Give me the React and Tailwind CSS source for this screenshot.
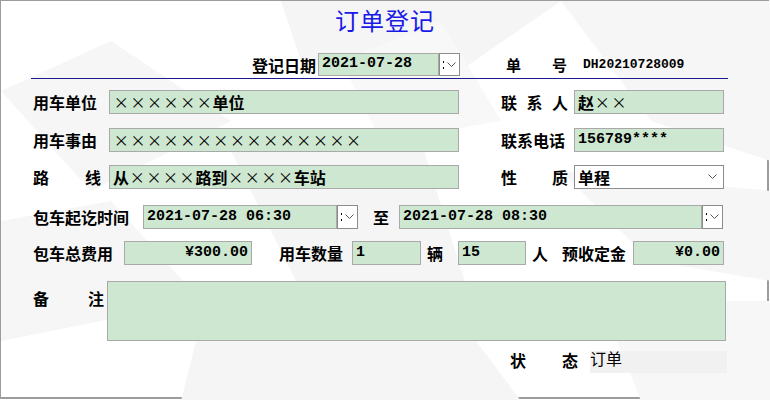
import React from 'react'

const CJK = { fontFamily: '"Noto Sans CJK SC", "Liberation Sans", sans-serif' }

// wrap each × so it takes a full-width cell like in the original form
function Xs({ text }) {
  return text.split('').map((c, i) =>
    c === '×' ? (
      <span key={i} className="inline-block w-[16.6px] text-center font-normal text-[15px]">×</span>
    ) : (
      <span key={i}>{c}</span>
    )
  )
}

function Label({ children, className = '' }) {
  return <div className={`shrink-0 text-[16px] font-bold text-black leading-none ${className}`}>{children}</div>
}

function Spread({ chars, className = '' }) {
  return (
    <div className={`shrink-0 flex justify-between text-[16px] font-bold text-black leading-none ${className}`}>
      {chars.map(c => <span key={c}>{c}</span>)}
    </div>
  )
}

function Field({ children, className = '', mono = false, right = false }) {
  return (
    <div
      className={`shrink-0 h-full flex items-center border border-[#a9a9a9] bg-[#cee7d0] px-[3px] text-black text-[16px] font-bold whitespace-nowrap overflow-hidden ${right ? 'justify-end pr-[3px]' : ''} ${className}`}
      style={mono ? { fontFamily: '"Liberation Mono", monospace', fontSize: 15 } : undefined}
    >
      {children}
    </div>
  )
}

function DropBtn() {
  return (
    <div className="shrink-0 h-full w-[21px] flex items-center border border-[#8c8c8c] bg-white">
      <div className="ml-[3px] flex flex-col gap-[4px]">
        <span className="block w-px h-[2px] bg-black" />
        <span className="block w-px h-[2px] bg-black" />
      </div>
      <svg width="9" height="6" viewBox="0 0 9 6" className="ml-[3px]">
        <path d="M0.5 0.5 L4.5 4.5 L8.5 0.5" fill="none" stroke="#555" strokeWidth="1" />
      </svg>
    </div>
  )
}

function Background() {
  return (
    <svg className="absolute inset-0 pointer-events-none" width="770" height="400" viewBox="0 0 770 400">
      <polygon points="280,0 560,0 430,90 300,60" fill="#f5f5f5" />
      <polygon points="560,0 770,0 770,160 650,120" fill="#f6f6f6" />
      <polygon points="0,90 110,40 230,120 90,190" fill="#f6f6f6" />
      <polygon points="230,150 420,140 470,300 300,290" fill="#f5f5f5" />
      <polygon points="0,220 110,200 200,300 0,340" fill="#f6f6f6" />
      <polygon points="560,170 770,190 770,280 650,260" fill="#f6f6f6" />
      <polygon points="200,320 460,320 520,400 180,400" fill="#f5f5f5" />
      <polygon points="600,300 770,300 770,400 640,400" fill="#f7f7f7" />
      <polygon points="340,60 440,20 500,120 380,140" fill="#f8f8f8" />
    </svg>
  )
}

export default function App() {
  return (
    <div className="w-[770px] h-[400px] bg-white overflow-hidden" style={CJK}>
      <div className="relative w-[769px] h-[399px] border border-[#9c9c9c] border-b-2 border-r-2">
        <Background />
        <div className="relative">
          {/* title */}
          <div className="h-[34px] pt-[5px] flex justify-center">
            <h1 className="text-[24px] leading-[28px] tracking-[1px] text-[#1a1ae8] ml-[2px]">订单登记</h1>
          </div>

          {/* header row */}
          <div className="mt-[18px] h-[23px] flex items-center">
            <div className="w-[251px] shrink-0" />
            <Label className="text-[15px] w-[66px]">登记日期</Label>
            <Field mono className="w-[121px]">2021-07-28</Field>
            <DropBtn />
            <div className="w-[46px] shrink-0" />
            <Spread chars={['单', '号']} className="w-[61px] !text-[15px]" />
            <div
              className="ml-[16px] font-bold text-black"
              style={{ fontFamily: '"Liberation Mono", monospace', fontSize: 13 }}
            >
              DH20210728009
            </div>
          </div>

          {/* divider */}
          <div className="mt-[2px] ml-[30px] w-[697px] h-px bg-[#1c1c8c]" />

          {/* row 1 */}
          <div className="mt-[11px] h-[24px] flex items-center pl-[32px]">
            <Label className="w-[76px]">用车单位</Label>
            <Field className="w-[350px]"><Xs text="××××××单位" /></Field>
            <div className="w-[42px] shrink-0" />
            <Spread chars={['联', '系', '人']} className="w-[67px]" />
            <div className="w-[6px] shrink-0" />
            <Field className="w-[150px]"><Xs text="赵××" /></Field>
          </div>

          {/* row 2 */}
          <div className="mt-[14px] h-[24px] flex items-center pl-[32px]">
            <Label className="w-[76px]">用车事由</Label>
            <Field className="w-[350px]"><Xs text="×××××××××××××××" /></Field>
            <div className="w-[42px] shrink-0" />
            <Label className="w-[73px]">联系电话</Label>
            <Field mono className="w-[150px]">156789****</Field>
          </div>

          {/* row 3 */}
          <div className="mt-[13px] h-[24px] flex items-center pl-[32px]">
            <Spread chars={['路', '线']} className="w-[68px]" />
            <div className="w-[8px] shrink-0" />
            <Field className="w-[350px]"><Xs text="从××××路到××××车站" /></Field>
            <div className="w-[42px] shrink-0" />
            <Spread chars={['性', '质']} className="w-[67px]" />
            <div className="w-[6px] shrink-0" />
            <div className="shrink-0 h-full w-[150px] flex items-center justify-between border border-[#8c8c8c] bg-white pl-[3px] pr-[6px] text-[16px] font-bold text-black">
              <span>单程</span>
              <svg width="9" height="6" viewBox="0 0 9 6">
                <path d="M0.5 0.5 L4.5 4.5 L8.5 0.5" fill="none" stroke="#555" strokeWidth="1" />
              </svg>
            </div>
          </div>

          {/* row 4 */}
          <div className="mt-[16px] h-[24px] flex items-center pl-[32px]">
            <Label className="w-[110px]">包车起讫时间</Label>
            <Field mono className="w-[194px]">2021-07-28 06:30</Field>
            <DropBtn />
            <div className="w-[15px] shrink-0" />
            <Label className="w-[26px]">至</Label>
            <Field mono className="w-[303px]">2021-07-28 08:30</Field>
            <DropBtn />
          </div>

          {/* row 5 */}
          <div className="mt-[12px] h-[24px] flex items-center pl-[32px]">
            <Label className="w-[91px]">包车总费用</Label>
            <Field mono right className="w-[128px]">¥300.00</Field>
            <div className="w-[27px] shrink-0" />
            <Label className="w-[73px]">用车数量</Label>
            <Field mono className="w-[69px]">1</Field>
            <div className="w-[6px] shrink-0" />
            <Label className="w-[31px]">辆</Label>
            <Field mono className="w-[68px]">15</Field>
            <div className="w-[6px] shrink-0" />
            <Label className="w-[30px]">人</Label>
            <Label className="w-[71px]">预收定金</Label>
            <Field mono right className="w-[91px]">¥0.00</Field>
          </div>

          {/* remark */}
          <div className="mt-[16px] flex pl-[32px]">
            <Spread chars={['备', '注']} className="w-[71px] mt-[9px]" />
            <div className="w-[3px] shrink-0" />
            <div className="h-[60px] w-[619px] border border-[#a9a9a9] bg-[#cee7d0]" />
          </div>

          {/* status */}
          <div className="mt-[5px] h-[27px] flex items-center">
            <div className="w-[509px] shrink-0" />
            <Spread chars={['状', '态']} className="w-[68px]" />
            <div className="ml-[12px] h-[22px] w-[137px] mt-[4px] bg-[#f1f1f1] text-[16px] text-black leading-[14px]">
              订单
            </div>
          </div>
        </div>
      </div>
    </div>
  )
}
